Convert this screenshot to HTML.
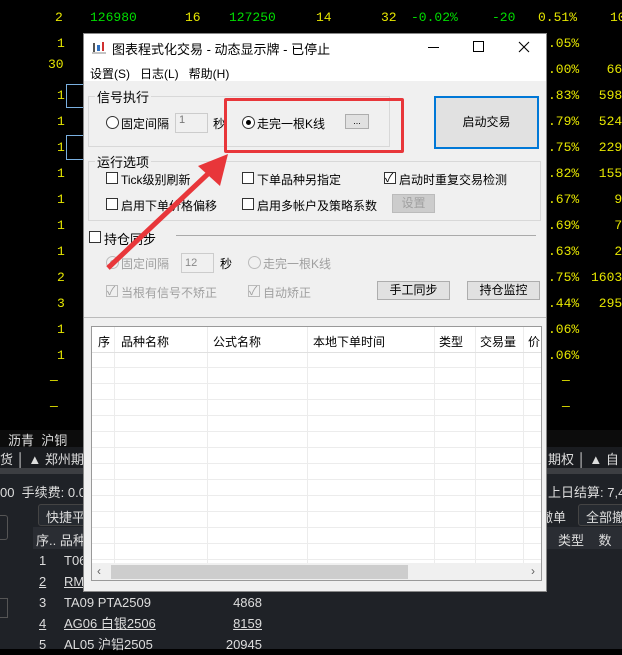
<!DOCTYPE html><html><head><meta charset="utf-8"><style>
*{margin:0;padding:0;box-sizing:border-box}
body{width:622px;height:649px;background:#000;position:relative;overflow:hidden;font-family:"Liberation Sans","Noto Sans CJK SC",sans-serif;font-size:12px}
.a{position:absolute;white-space:nowrap}
.y{color:#e6e600;font-family:"Liberation Mono","Noto Sans CJK SC",monospace;font-size:13px}
.g{color:#00dd00;font-family:"Liberation Mono",monospace;font-size:13px}
.w{color:#ddd}
.d{color:#000;font-size:12px}
.gr{color:#a0a0a0;font-size:12px}
.cb{position:absolute;width:12px;height:12px;border:1px solid #333;background:#fff}
.rb{position:absolute;width:13px;height:13px;border:1px solid #333;border-radius:50%;background:#fff}
.btn{position:absolute;background:#e1e1e1;border:1px solid #adadad;text-align:center;font-size:12px;color:#000}
</style></head><body>
<div class="a y" style="left:55px;top:10px">2</div>
<div class="a g" style="left:90px;top:10px">126980</div>
<div class="a y" style="left:185px;top:10px">16</div>
<div class="a g" style="left:229px;top:10px">127250</div>
<div class="a y" style="left:316px;top:10px">14</div>
<div class="a y" style="left:381px;top:10px">32</div>
<div class="a g" style="left:411px;top:10px">-0.02%</div>
<div class="a g" style="left:492px;top:10px">-20</div>
<div class="a y" style="left:538px;top:10px">0.51%</div>
<div class="a y" style="left:610px;top:10px">10</div>
<div class="a y" style="left:57px;top:31px;line-height:26px">1<br>&nbsp;<br>1<br>1<br>1<br>1<br>1<br>1<br>1<br>2<br>3<br>1<br>1</div>
<div class="a y" style="left:48px;top:57px">30</div>
<div class="a y" style="left:50px;top:368px;line-height:26px">—<br>—</div>
<div class="a y" style="left:548px;top:31px;line-height:26px">.05%<br>.00%<br>.83%<br>.79%<br>.75%<br>.82%<br>.67%<br>.69%<br>.63%<br>.75%<br>.44%<br>.06%<br>.06%</div>
<div class="a y" style="left:562px;top:368px;line-height:26px">—<br>—</div>
<div class="a y" style="left:590px;top:31px;line-height:26px;text-align:right;width:40px">1<br>666<br>5986<br>5248<br>2296<br>1557<br>98<br>71<br>26<br>16030<br>2955<br>5<br>2</div>
<div class="a" style="left:66px;top:84px;width:20px;height:24px;border:1px solid #7ab0e0;border-right:none"></div>
<div class="a" style="left:66px;top:135px;width:20px;height:25px;border:1px solid #7ab0e0;border-right:none"></div>
<div class="a" style="left:0;top:430px;width:622px;height:17px;background:#0c0c0c"></div>
<div class="a w" style="left:8px;top:430px;font-size:13px">沥青 &nbsp;沪铜</div>
<div class="a" style="left:0;top:447px;width:622px;height:21px;background:#1a1c20"></div>
<div class="a w" style="left:0;top:449px;font-size:13px">货 │ ▲ 郑州期</div>
<div class="a w" style="left:548px;top:449px;font-size:13px">期权 │ ▲ 自</div>
<div class="a" style="left:0;top:468px;width:622px;height:6px;background:#3c3e42"></div>
<div class="a" style="left:0;top:474px;width:622px;height:175px;background:#1f2227"></div>
<div class="a w" style="left:0;top:482px;font-size:13px">00 &nbsp;手续费: 0.0</div>
<div class="a w" style="left:548px;top:482px;font-size:13px">上日结算: 7,4</div>
<div class="a" style="left:38px;top:504px;width:50px;height:22px;border:1px solid #444;border-radius:3px;background:#262a30"></div>
<div class="a w" style="left:46px;top:507px;font-size:13px">快捷平</div>
<div class="a w" style="left:540px;top:507px;font-size:13px">撤单</div>
<div class="a" style="left:578px;top:504px;width:50px;height:22px;border:1px solid #444;border-radius:3px;background:#262a30"></div>
<div class="a w" style="left:586px;top:507px;font-size:13px">全部撤</div>
<div class="a" style="left:33px;top:527px;width:589px;height:22px;background:#2a2d33"></div>
<div class="a w" style="left:36px;top:530px;font-size:13px">序.. 品种</div>
<div class="a w" style="left:558px;top:530px;font-size:13px">类型 &nbsp;&nbsp;&nbsp;数</div>
<div class="a w" style="left:39px;top:550px;line-height:21px;font-size:13px">1<br><u>2</u><br>3<br><u>4</u><br>5</div>
<div class="a w" style="left:64px;top:550px;line-height:21px;font-size:13px">T06<br><u>RM</u><br>TA09 PTA2509<br><u>AG06 白银2506</u><br>AL05 沪铝2505</div>
<div class="a w" style="left:210px;top:592px;line-height:21px;font-size:13px;text-align:right;width:52px">4868<br><u>8159</u><br>20945</div>
<div class="a" style="left:0;top:515px;width:8px;height:25px;border:1px solid #555;border-left:none;border-radius:0 3px 3px 0"></div>
<div class="a" style="left:0;top:598px;width:8px;height:20px;border:1px solid #555;border-left:none"></div>
<div class="a" style="left:83px;top:33px;width:464px;height:559px;background:#f0f0f0;border:1px solid #888"></div>
<div class="a" style="left:84px;top:34px;width:462px;height:47px;background:#fff"></div>
<svg class="a" style="left:92px;top:40px" width="14" height="14"><rect x="1" y="3" width="2" height="9" fill="#555"/><rect x="5" y="5" width="3" height="6" fill="#3070c0"/><rect x="10" y="2" width="2" height="9" fill="#d03030"/><line x1="0" y1="13" x2="14" y2="13" stroke="#888"/></svg>
<div class="a d" style="left:112px;top:39px;font-size:13px">图表程式化交易 - 动态显示牌 - 已停止</div>
<div class="a" style="left:428px;top:47px;width:11px;height:1px;background:#000"></div>
<div class="a" style="left:473px;top:41px;width:11px;height:11px;border:1px solid #000"></div>
<svg class="a" style="left:518px;top:41px" width="12" height="12"><path d="M1 1L11 11M11 1L1 11" stroke="#000" stroke-width="1.1"/></svg>
<div class="a d" style="left:90px;top:65px">设置(S) &nbsp;&nbsp;日志(L) &nbsp;&nbsp;帮助(H)</div>
<div class="a" style="left:88px;top:96px;width:302px;height:51px;border:1px solid #d8d8d8"></div>
<div class="a d" style="left:95px;top:87px;background:#f0f0f0;padding:0 2px;font-size:13px">信号执行</div>
<div class="rb" style="left:106px;top:116px"></div>
<div class="a d" style="left:121px;top:115px">固定间隔</div>
<div class="a" style="left:175px;top:113px;width:33px;height:20px;border:1px solid #ccc;background:#f0f0f0;color:#777;padding-left:3px;font-size:11px">1</div>
<div class="a d" style="left:213px;top:115px">秒</div>
<div class="rb" style="left:242px;top:116px"></div><div class="a" style="left:246px;top:120px;width:5px;height:5px;border-radius:50%;background:#000"></div>
<div class="a d" style="left:257px;top:115px">走完一根K线</div>
<div class="btn" style="left:345px;top:114px;width:24px;height:15px;font-size:9px;line-height:12px">...</div>
<div class="a" style="left:224px;top:98px;width:180px;height:55px;border:3px solid #e8363a;border-radius:2px"></div>
<div class="btn" style="left:434px;top:96px;width:105px;height:53px;border:2px solid #0078d7;line-height:49px">启动交易</div>
<div class="a" style="left:88px;top:161px;width:453px;height:60px;border:1px solid #d8d8d8"></div>
<div class="a d" style="left:95px;top:152px;background:#f0f0f0;padding:0 2px;font-size:13px">运行选项</div>
<div class="cb" style="left:106px;top:172px"></div><div class="a d" style="left:121px;top:171px">Tick级别刷新</div>
<div class="cb" style="left:242px;top:172px"></div><div class="a d" style="left:257px;top:171px">下单品种另指定</div>
<div class="cb" style="left:384px;top:172px"></div><div class="a d" style="left:385px;top:169px;font-size:12px">✓</div><div class="a d" style="left:399px;top:171px">启动时重复交易检测</div>
<div class="cb" style="left:106px;top:198px"></div><div class="a d" style="left:121px;top:197px">启用下单价格偏移</div>
<div class="cb" style="left:242px;top:198px"></div><div class="a d" style="left:257px;top:197px">启用多帐户及策略系数</div>
<div class="btn" style="left:392px;top:194px;width:43px;height:19px;color:#a0a0a0;border-color:#bbb;background:#ccc;line-height:17px">设置</div>
<div class="cb" style="left:89px;top:231px"></div><div class="a d" style="left:104px;top:229px;font-size:13px">持仓同步</div>
<div class="a" style="left:176px;top:235px;width:360px;height:1px;background:#aaa"></div>
<div class="rb" style="left:106px;top:256px;border-color:#bbb;background:#f0f0f0"></div><div class="a" style="left:110px;top:260px;width:5px;height:5px;border-radius:50%;background:#bbb"></div>
<div class="a gr" style="left:121px;top:255px">固定间隔</div>
<div class="a" style="left:181px;top:253px;width:33px;height:20px;border:1px solid #ccc;color:#888;padding-left:3px;font-size:11px;line-height:18px">12</div>
<div class="a d" style="left:220px;top:255px">秒</div>
<div class="rb" style="left:248px;top:256px;border-color:#bbb;background:#f0f0f0"></div>
<div class="a gr" style="left:263px;top:255px">走完一根K线</div>
<div class="cb" style="left:106px;top:285px;border-color:#bbb;background:#f0f0f0"></div><div class="a gr" style="left:107px;top:282px">✓</div><div class="a gr" style="left:121px;top:284px">当根有信号不矫正</div>
<div class="cb" style="left:248px;top:285px;border-color:#bbb;background:#f0f0f0"></div><div class="a gr" style="left:249px;top:282px">✓</div><div class="a gr" style="left:263px;top:284px">自动矫正</div>
<div class="btn" style="left:377px;top:281px;width:73px;height:19px;line-height:17px">手工同步</div>
<div class="btn" style="left:467px;top:281px;width:73px;height:19px;line-height:17px">持仓监控</div>
<div class="a" style="left:84px;top:317px;width:462px;height:1px;background:#bbb"></div>
<div class="a" style="left:91px;top:326px;width:451px;height:255px;background:#fff;border:1px solid #999;overflow:hidden">
<svg width="451" height="255" style="position:absolute;left:0;top:0">
<g stroke="#ececec"><line x1="22.5" y1="0" x2="22.5" y2="236"/><line x1="115.5" y1="0" x2="115.5" y2="236"/><line x1="215.5" y1="0" x2="215.5" y2="236"/><line x1="342.5" y1="0" x2="342.5" y2="236"/><line x1="383.5" y1="0" x2="383.5" y2="236"/><line x1="431.5" y1="0" x2="431.5" y2="236"/>
<line x1="0" y1="40.5" x2="451" y2="40.5"/><line x1="0" y1="56.5" x2="451" y2="56.5"/><line x1="0" y1="72.5" x2="451" y2="72.5"/><line x1="0" y1="88.5" x2="451" y2="88.5"/><line x1="0" y1="104.5" x2="451" y2="104.5"/><line x1="0" y1="120.5" x2="451" y2="120.5"/><line x1="0" y1="136.5" x2="451" y2="136.5"/><line x1="0" y1="152.5" x2="451" y2="152.5"/><line x1="0" y1="168.5" x2="451" y2="168.5"/><line x1="0" y1="184.5" x2="451" y2="184.5"/><line x1="0" y1="200.5" x2="451" y2="200.5"/><line x1="0" y1="216.5" x2="451" y2="216.5"/><line x1="0" y1="232.5" x2="451" y2="232.5"/></g>
<g stroke="#e0e0e0"><line x1="0" y1="25.5" x2="451" y2="25.5"/></g>
</svg>
<div class="a d" style="left:6px;top:6px">序</div>
<div class="a d" style="left:29px;top:6px">品种名称</div>
<div class="a d" style="left:121px;top:6px">公式名称</div>
<div class="a d" style="left:221px;top:6px">本地下单时间</div>
<div class="a d" style="left:347px;top:6px">类型</div>
<div class="a d" style="left:388px;top:6px">交易量</div>
<div class="a d" style="left:436px;top:6px">价</div>
<div class="a" style="left:0;top:236px;width:451px;height:17px;background:#f0f0f0"></div>
<div class="a" style="left:19px;top:238px;width:297px;height:14px;background:#cdcdcd"></div>
<div class="a" style="left:5px;top:237px;color:#606060;font-size:12px">‹</div>
<div class="a" style="left:439px;top:237px;color:#606060;font-size:12px">›</div>
</div>
<svg class="a" style="left:0;top:0" width="622" height="649"><line x1="108" y1="268" x2="212" y2="170" stroke="#e8363a" stroke-width="5"/><polygon points="228,154 198,166 220,186" fill="#e8363a"/></svg>
</body></html>
